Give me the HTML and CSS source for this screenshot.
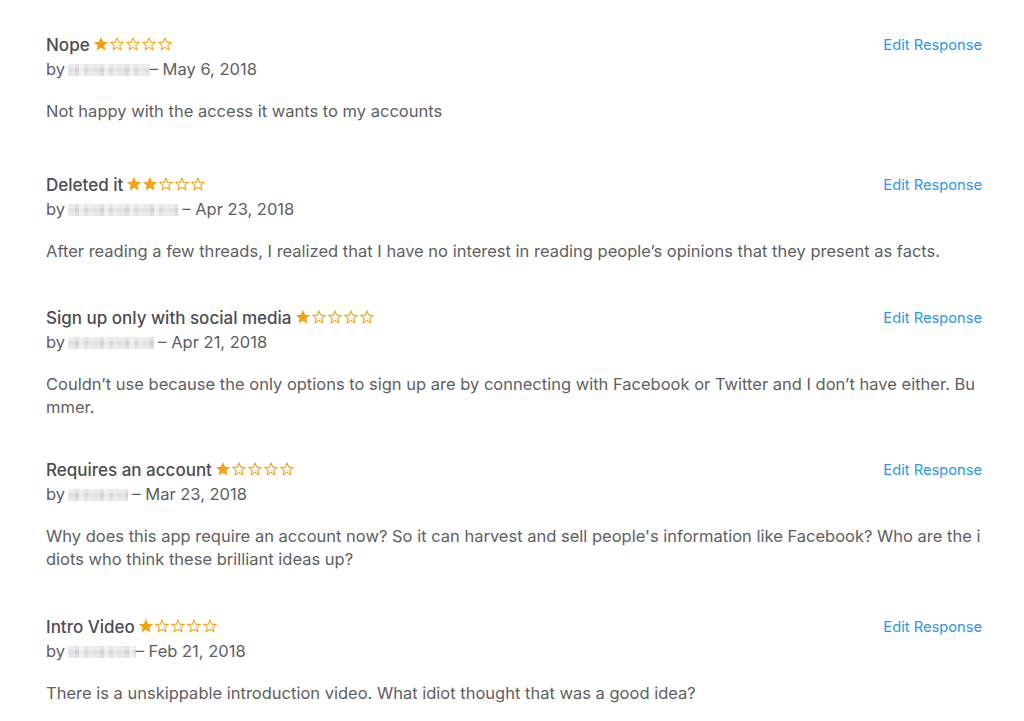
FILE: index.html
```html
<!DOCTYPE html>
<html lang="en">
<head>
    <meta charset="UTF-8">
    <meta name="viewport" content="width=device-width, initial-scale=1.0">
    <title>Ratings and Reviews</title>
    <link rel="stylesheet" href="styles.css">
</head>
<body>

<svg class="defs" width="0" height="0">
    <symbol id="star-full" viewBox="0 0 24 24">
        <path d="M12 1.5l3.1 7 7.6.7-5.8 5 1.8 7.5L12 17.7l-6.7 4 1.8-7.5-5.8-5 7.6-.7z" fill="#f5a20f"/>
    </symbol>
    <symbol id="star-empty" viewBox="0 0 24 24">
        <path d="M12 3.2l2.6 6 6.5.6-4.9 4.3 1.5 6.4L12 17.1l-5.7 3.4 1.5-6.4-4.9-4.3 6.5-.6z" fill="none" stroke="#f5a20f" stroke-width="1.6"/>
    </symbol>
</svg>

<div class="reviews">

    <div class="review review-first">
        <div class="review-head">
            <div class="review-title">Nope
                <span class="stars">
                    <svg><use href="#star-full"/></svg><svg><use href="#star-empty"/></svg><svg><use href="#star-empty"/></svg><svg><use href="#star-empty"/></svg><svg><use href="#star-empty"/></svg>
                </span>
            </div>
            <a class="edit" href="#">Edit Response</a>
        </div>
        <div class="byline">by <span class="blur blur-a"></span>– May 6, 2018</div>
        <p class="review-body">Not happy with the access it wants to my accounts</p>
    </div>

    <div class="review">
        <div class="review-head">
            <div class="review-title">Deleted it
                <span class="stars">
                    <svg><use href="#star-full"/></svg><svg><use href="#star-full"/></svg><svg><use href="#star-empty"/></svg><svg><use href="#star-empty"/></svg><svg><use href="#star-empty"/></svg>
                </span>
            </div>
            <a class="edit" href="#">Edit Response</a>
        </div>
        <div class="byline">by <span class="blur blur-b"></span> – Apr 23, 2018</div>
        <p class="review-body">After reading a few threads, I realized that I have no interest in reading people’s opinions that they present as facts.</p>
    </div>

    <div class="review review-tight">
        <div class="review-head">
            <div class="review-title">Sign up only with social media
                <span class="stars">
                    <svg><use href="#star-full"/></svg><svg><use href="#star-empty"/></svg><svg><use href="#star-empty"/></svg><svg><use href="#star-empty"/></svg><svg><use href="#star-empty"/></svg>
                </span>
            </div>
            <a class="edit" href="#">Edit Response</a>
        </div>
        <div class="byline">by <span class="blur blur-c"></span> – Apr 21, 2018</div>
        <p class="review-body">Couldn’t use because the only options to sign up are by connecting with Facebook or Twitter and I don’t have either. Bummer.</p>
    </div>

    <div class="review review-loose">
        <div class="review-head">
            <div class="review-title">Requires an account
                <span class="stars">
                    <svg><use href="#star-full"/></svg><svg><use href="#star-empty"/></svg><svg><use href="#star-empty"/></svg><svg><use href="#star-empty"/></svg><svg><use href="#star-empty"/></svg>
                </span>
            </div>
            <a class="edit" href="#">Edit Response</a>
        </div>
        <div class="byline">by <span class="blur blur-d"></span> – Mar 23, 2018</div>
        <p class="review-body">Why does this app require an account now? So it can harvest and sell people's information like Facebook? Who are the idiots who think these brilliant ideas up?</p>
    </div>

    <div class="review">
        <div class="review-head">
            <div class="review-title">Intro Video
                <span class="stars">
                    <svg><use href="#star-full"/></svg><svg><use href="#star-empty"/></svg><svg><use href="#star-empty"/></svg><svg><use href="#star-empty"/></svg><svg><use href="#star-empty"/></svg>
                </span>
            </div>
            <a class="edit" href="#">Edit Response</a>
        </div>
        <div class="byline">by <span class="blur blur-e"></span>– Feb 21, 2018</div>
        <p class="review-body">There is a unskippable introduction video. What idiot thought that was a good idea?</p>
    </div>

</div>

</body>
</html>
```

FILE: styles.css
```css
body {
    margin: 0;
    background: #fff;
    font-family: Inter, "Noto Sans", Arial, sans-serif;
    color: #5b5b5e;
}
.defs {
    position: absolute;
}
.reviews {
    padding: 33px 42px 0 46px;
}
.review {
    margin-bottom: 43px;
}
.review-first {
    margin-bottom: 50px;
}
.review-tight {
    margin-bottom: 39px;
}
.review-loose {
    margin-bottom: 44px;
}
.review-head {
    display: flex;
    justify-content: space-between;
    align-items: center;
    height: 24px;
}
.review-title {
    font-size: 17px;
    font-weight: 500;
    color: #4c4c51;
    display: flex;
    align-items: center;
}
.stars {
    display: inline-flex;
    margin-left: 3px;
    margin-top: -2px;
}
.stars svg {
    width: 16px;
    height: 16px;
}
.edit {
    font-size: 14.7px;
    color: #2b98ea;
    text-decoration: none;
}
.byline {
    font-size: 16.5px;
    line-height: 24px;
    color: #5e5e62;
}
.blur {
    display: inline-block;
    height: 12px;
    vertical-align: -1px;
    margin-left: -2px;
    background:
        linear-gradient(180deg, rgba(255,255,255,0.35) 0 4px, rgba(255,255,255,0) 4px 8px, rgba(255,255,255,0.25) 8px),
        repeating-linear-gradient(90deg, #e2e2e4 0 7px, #d3d3d6 7px 11px, #ececee 11px 16px, #dadadc 16px 20px, #e6e6e8 20px 25px);
}
.blur-a { width: 82px; }
.blur-b { width: 110px; }
.blur-c { width: 86px; }
.blur-d { width: 60px; }
.blur-e { width: 68px; }
.review-body {
    margin: 19px 0 0;
    font-size: 16.5px;
    line-height: 23px;
    color: #606063;
    word-break: break-all;
}
```
